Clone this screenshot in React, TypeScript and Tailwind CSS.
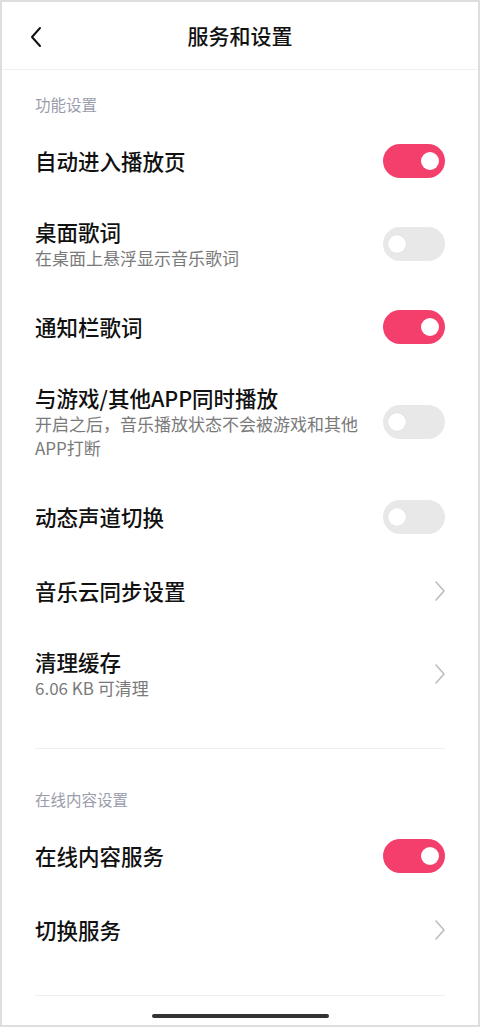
import React from "react";

const FONT = { fontFamily: '"Noto Sans CJK SC", "Noto Sans", sans-serif' };

function Toggle({ on }: { on: boolean }) {
  return (
    <div
      className={
        "relative shrink-0 w-[62px] h-[34px] rounded-full " +
        (on ? "bg-[#f43f6c]" : "bg-[#e8e8e8]")
      }
    >
      <div
        className={
          "absolute top-[8px] w-[18px] h-[18px] rounded-full bg-white " +
          (on ? "right-[6px]" : "left-[5px] shadow-[0_0_1px_rgba(0,0,0,0.15)]")
        }
      />
    </div>
  );
}

function Chevron() {
  return (
    <svg width="12" height="22" viewBox="0 0 12 22" className="shrink-0 mr-[-1px]">
      <path d="M2 2 L10 11 L2 20" fill="none" stroke="#bdbdbd" strokeWidth="1.6" strokeLinecap="round" strokeLinejoin="round" />
    </svg>
  );
}

type RowProps = { title: string; sub?: string; right: React.ReactNode };

function Row({ title, sub, right }: RowProps) {
  return (
    <div className="flex items-center justify-between min-h-[74px] py-5 gap-4">
      <div className="flex flex-col max-w-[330px]">
        <div className="text-[21.5px] leading-[28px] font-medium text-[#111]">{title}</div>
        {sub && <div className="text-[17px] leading-[24px] text-[#7a7a7a]">{sub}</div>}
      </div>
      {right}
    </div>
  );
}

function Label({ text }: { text: string }) {
  return <div className="text-[15.5px] leading-[20px] text-[#9a9cab] mb-[10px]">{text}</div>;
}

export default function App() {
  return (
    <div style={FONT} className="w-[480px] h-[1027px] box-border border-2 border-[#dedede] bg-white flex flex-col overflow-hidden">
      <div className="relative h-[68px] flex items-center justify-center border-b border-[#f0f0f0] shrink-0">
        <svg width="16" height="24" viewBox="0 0 16 24" className="absolute left-[26px] top-[23px]">
          <path d="M12 3 L4 12 L12 21" fill="none" stroke="#111" strokeWidth="2" strokeLinecap="round" strokeLinejoin="round" />
        </svg>
        <div className="text-[21px] font-medium text-[#111] tracking-[0px]">服务和设置</div>
      </div>

      <div className="px-[33px]">
        <div className="pt-[24px] pb-[28px] border-b border-[#efefef]">
          <Label text="功能设置" />
          <Row title="自动进入播放页" right={<Toggle on />} />
          <Row title="桌面歌词" sub="在桌面上悬浮显示音乐歌词" right={<Toggle on={false} />} />
          <Row title="通知栏歌词" right={<Toggle on />} />
          <Row title="与游戏/其他APP同时播放" sub="开启之后，音乐播放状态不会被游戏和其他APP打断" right={<Toggle on={false} />} />
          <Row title="动态声道切换" right={<Toggle on={false} />} />
          <Row title="音乐云同步设置" right={<Chevron />} />
          <Row title="清理缓存" sub="6.06 KB 可清理" right={<Chevron />} />
        </div>
        <div className="pt-[40px] pb-[28px] border-b border-[#efefef]">
          <Label text="在线内容设置" />
          <Row title="在线内容服务" right={<Toggle on />} />
          <Row title="切换服务" right={<Chevron />} />
        </div>
      </div>

      <div className="flex-1 flex items-end justify-center pb-[7px]">
        <div className="w-[177px] h-[4px] rounded-full bg-[#333]" />
      </div>
    </div>
  );
}
